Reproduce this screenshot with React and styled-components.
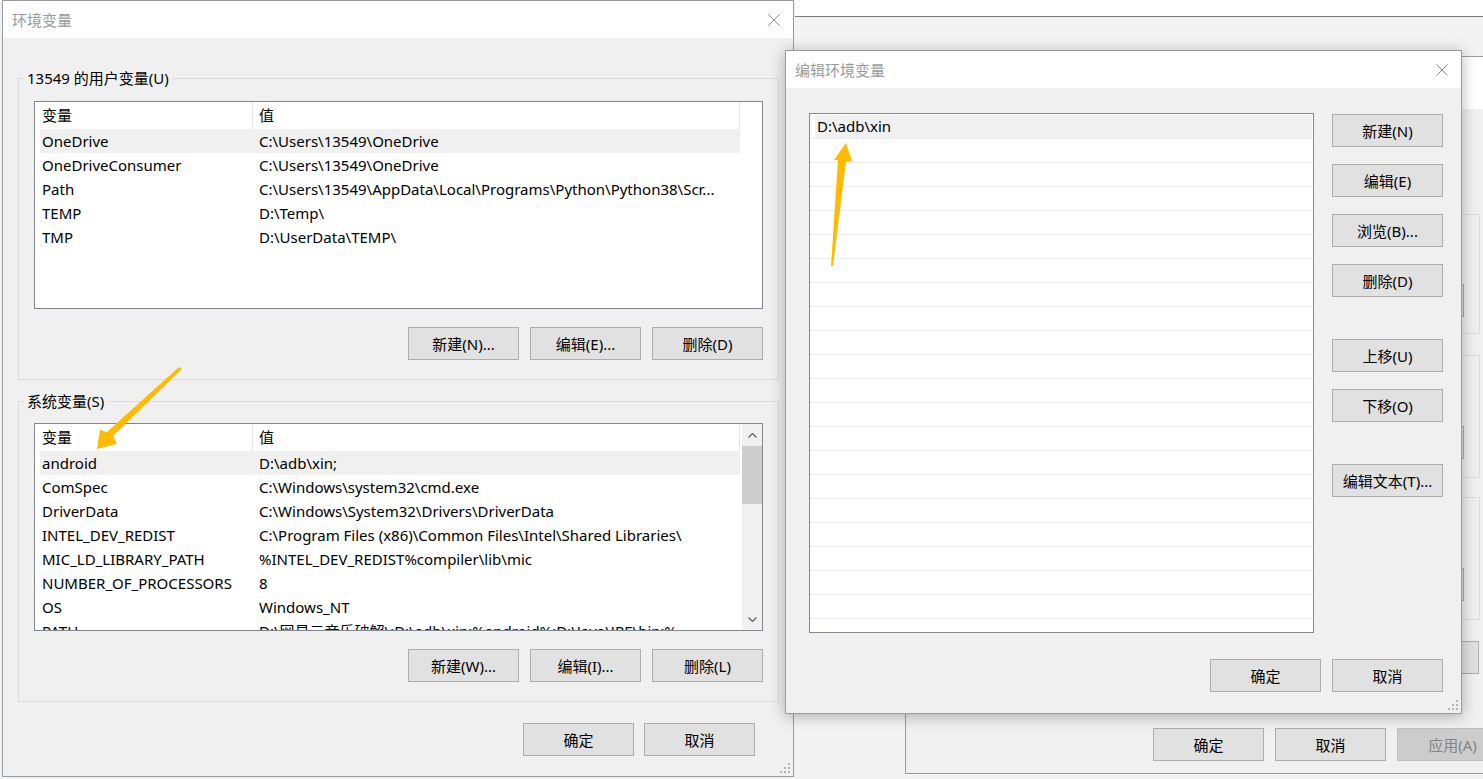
import React from "react";
import styled, { createGlobalStyle } from "styled-components";

const GlobalStyle = createGlobalStyle`
  html, body { margin: 0; padding: 0; }
  body {
    font-family: "Noto Sans", "Noto Sans CJK SC", sans-serif;
    font-size: 15px;
    color: #000;
    background: #eef0f2;
  }
  * { box-sizing: border-box; }
`;

const userVars = [
  ["OneDrive", "C:\\Users\\13549\\OneDrive"],
  ["OneDriveConsumer", "C:\\Users\\13549\\OneDrive"],
  ["Path", "C:\\Users\\13549\\AppData\\Local\\Programs\\Python\\Python38\\Scr..."],
  ["TEMP", "D:\\Temp\\"],
  ["TMP", "D:\\UserData\\TEMP\\"],
];

const systemVars = [
  ["android", "D:\\adb\\xin;"],
  ["ComSpec", "C:\\Windows\\system32\\cmd.exe"],
  ["DriverData", "C:\\Windows\\System32\\Drivers\\DriverData"],
  ["INTEL_DEV_REDIST", "C:\\Program Files (x86)\\Common Files\\Intel\\Shared Libraries\\"],
  ["MIC_LD_LIBRARY_PATH", "%INTEL_DEV_REDIST%compiler\\lib\\mic"],
  ["NUMBER_OF_PROCESSORS", "8"],
  ["OS", "Windows_NT"],
  ["PATH", "D:\\网易云音乐破解\\;D:\\adb\\xin;%android%;D:\\Java\\JRE\\bin;%..."],
];

const pathItems = ["D:\\adb\\xin"];

export default function App() {
  return (
    <>
      <GlobalStyle />
      <Desktop>
        <SettingsWindow>
          <SettingsTop />
        </SettingsWindow>

        <Window $left={905} $top={56} $width={620} $height={718}>
          <BackTitle />
          <BackBody>
            <BackColumn>
              <BackGroup $h={120} $pb={16}>
                <WinButton>设置(S)...</WinButton>
              </BackGroup>
              <BackGroup $h={123} $pb={18} $mt={21}>
                <WinButton>设置(E)...</WinButton>
              </BackGroup>
              <BackGroup $h={123} $pb={18} $mt={19}>
                <WinButton>设置(T)...</WinButton>
              </BackGroup>
              <ButtonRow $mt={21} $pr={1}>
                <WinButton $w={150}>环境变量(N)...</WinButton>
              </ButtonRow>
            </BackColumn>
            <ButtonRow $mt={54} $gap={11}>
              <WinButton>确定</WinButton>
              <WinButton>取消</WinButton>
              <WinButton disabled>应用(A)</WinButton>
            </ButtonRow>
          </BackBody>
        </Window>

        <Window $left={2} $top={0} $width={792} $height={777}>
          <TitleBar>
            <span>环境变量</span>
            <CloseIcon />
          </TitleBar>
          <DialogBody>
            <GroupBox $mt={40}>
              <GroupLabel $gap={13}>13549 的用户变量(U)</GroupLabel>
              <VarList rows={userVars} />
              <ButtonRow $mt={18} $gap={11}>
                <WinButton>新建(N)...</WinButton>
                <WinButton>编辑(E)...</WinButton>
                <WinButton>删除(D)</WinButton>
              </ButtonRow>
            </GroupBox>
            <GroupBox $mt={21}>
              <GroupLabel $gap={12}>系统变量(S)</GroupLabel>
              <VarList rows={systemVars} scroll />
              <ButtonRow $mt={18} $gap={11}>
                <WinButton>新建(W)...</WinButton>
                <WinButton>编辑(I)...</WinButton>
                <WinButton>删除(L)</WinButton>
              </ButtonRow>
            </GroupBox>
            <ButtonRow $mt={21} $gap={10} $pr={24}>
              <WinButton>确定</WinButton>
              <WinButton>取消</WinButton>
            </ButtonRow>
            <Grip />
          </DialogBody>
        </Window>

        <Window $left={785} $top={50} $width={677} $height={664} $shadow>
          <TitleBar>
            <span>编辑环境变量</span>
            <CloseIcon />
          </TitleBar>
          <EditBody>
            <EditTop>
              <PathList>
                {Array.from({ length: 22 }).map((_, i) => (
                  <PathRow key={i}>
                    {pathItems[i] && <PathItem>{pathItems[i]}</PathItem>}
                  </PathRow>
                ))}
              </PathList>
              <SideButtons>
                <WinButton>新建(N)</WinButton>
                <WinButton $mt={17}>编辑(E)</WinButton>
                <WinButton $mt={17}>浏览(B)...</WinButton>
                <WinButton $mt={17}>删除(D)</WinButton>
                <WinButton $mt={42}>上移(U)</WinButton>
                <WinButton $mt={17}>下移(O)</WinButton>
                <WinButton $mt={42}>编辑文本(T)...</WinButton>
              </SideButtons>
            </EditTop>
            <ButtonRow $mt={26} $gap={11}>
              <WinButton>确定</WinButton>
              <WinButton>取消</WinButton>
            </ButtonRow>
            <Grip />
          </EditBody>
        </Window>

        <Arrows viewBox="0 0 1483 779">
          <polygon points="179,367 182,369 113,436 117,444 97,449 100,430 107,432" />
          <polygon points="846,143 852,161 846,162 833,266 831,266 838,160 834,160" />
        </Arrows>
      </Desktop>
    </>
  );
}

function VarList({ rows, scroll }) {
  return (
    <ListBox>
      <ListMain>
        <HeaderRow>
          <HeaderCell $w={218} $pl={7}>变量</HeaderCell>
          <HeaderCell $w={487} $pl={6}>值</HeaderCell>
        </HeaderRow>
        {rows.map(([name, value], i) => (
          <VarRow key={name} $selected={i === 0}>
            <NameCell>{name}</NameCell>
            <ValueCell>{value}</ValueCell>
          </VarRow>
        ))}
      </ListMain>
      {scroll && (
        <ScrollBar>
          <ScrollArrow $h={22}>
            <Chevron up />
          </ScrollArrow>
          <ScrollThumb />
          <ScrollSpace />
          <ScrollArrow $h={21}>
            <Chevron />
          </ScrollArrow>
        </ScrollBar>
      )}
    </ListBox>
  );
}

function CloseIcon() {
  return (
    <svg width="12" height="12" viewBox="0 0 12 12">
      <path d="M0.5 0.5 L11.5 11.5 M11.5 0.5 L0.5 11.5" stroke="#8a8a8a" strokeWidth="1" fill="none" />
    </svg>
  );
}

function Chevron({ up }) {
  return (
    <svg width="9" height="5" viewBox="0 0 9 5">
      <path
        d={up ? "M0.5 4.5 L4.5 0.5 L8.5 4.5" : "M0.5 0.5 L4.5 4.5 L8.5 0.5"}
        stroke="#606060"
        strokeWidth="1.2"
        fill="none"
      />
    </svg>
  );
}

function Grip() {
  const dots = [
    [8, 0],
    [4, 4],
    [8, 4],
    [0, 8],
    [4, 8],
    [8, 8],
  ];
  return (
    <GripBox width="10" height="10" viewBox="0 0 10 10">
      {dots.map(([x, y]) => (
        <rect key={`${x}-${y}`} x={x} y={y} width="2" height="2" fill="#b4b4b4" />
      ))}
    </GripBox>
  );
}

const Desktop = styled.div`
  position: relative;
  width: 1483px;
  height: 779px;
  overflow: hidden;
  background: #eef0f2;
`;

const SettingsWindow = styled.div`
  position: absolute;
  left: 795px;
  top: 0;
  width: 720px;
  height: 779px;
  background: #f3f3f3;
`;

const SettingsTop = styled.div`
  height: 17px;
  background: #fff;
  border-bottom: 1px solid #7a7a7a;
`;

const Window = styled.div`
  position: absolute;
  left: ${(p) => p.$left}px;
  top: ${(p) => p.$top}px;
  width: ${(p) => p.$width}px;
  height: ${(p) => p.$height}px;
  display: flex;
  flex-direction: column;
  background: #f0f0f0;
  border: 1px solid #9c9c9c;
  box-shadow: ${(p) => (p.$shadow ? "0 2px 14px rgba(0, 0, 0, 0.3)" : "none")};
`;

const TitleBar = styled.div`
  height: 37px;
  flex: none;
  display: flex;
  align-items: center;
  justify-content: space-between;
  padding: 0 13px 0 9px;
  background: #fff;
  color: #9a9a9a;
  font-size: 15px;
`;

const BackTitle = styled.div`
  height: 52px;
  flex: none;
  background: #fff;
`;

const BackBody = styled.div`
  flex: 1;
  display: flex;
  flex-direction: column;
  padding: 105px 16px 12px 20px;
`;

const BackColumn = styled.div`
  display: flex;
  flex-direction: column;
  margin-right: 28px;
`;

const BackGroup = styled.div`
  height: ${(p) => p.$h}px;
  margin-top: ${(p) => p.$mt || 0}px;
  border: 1px solid #dcdcdc;
  display: flex;
  align-items: flex-end;
  justify-content: flex-end;
  padding: 0 15px ${(p) => p.$pb}px;
`;

const DialogBody = styled.div`
  position: relative;
  flex: 1;
  display: flex;
  flex-direction: column;
  padding: 0 14px 0 15px;
`;

const GroupBox = styled.div`
  margin-top: ${(p) => p.$mt}px;
  border: 1px solid #dcdcdc;
  padding: 0 15px 19px;
  display: flex;
  flex-direction: column;
`;

const GroupLabel = styled.div`
  align-self: flex-start;
  height: 20px;
  line-height: 20px;
  margin: -11px 0 ${(p) => p.$gap}px -10px;
  padding: 0 3px;
  background: #f0f0f0;
  white-space: nowrap;
`;

const ListBox = styled.div`
  height: 208px;
  flex: none;
  display: flex;
  border: 1px solid #828790;
  background: #fff;
  overflow: hidden;
`;

const ListMain = styled.div`
  flex: 1;
  min-width: 0;
  overflow: hidden;
`;

const HeaderRow = styled.div`
  display: flex;
  height: 27px;
`;

const HeaderCell = styled.div`
  width: ${(p) => p.$w}px;
  flex: none;
  padding-left: ${(p) => p.$pl}px;
  line-height: 27px;
  border-right: 1px solid #e5e5e5;
`;

const VarRow = styled.div`
  display: flex;
  width: 700px;
  height: 24px;
  margin-left: 5px;
  line-height: 24px;
  white-space: nowrap;
  background: ${(p) => (p.$selected ? "#f0f0f0" : "transparent")};
`;

const NameCell = styled.div`
  width: 212px;
  flex: none;
  padding-left: 2px;
  overflow: hidden;
`;

const ValueCell = styled.div`
  flex: 1;
  min-width: 0;
  padding-left: 7px;
  overflow: hidden;
`;

const ScrollBar = styled.div`
  width: 20px;
  flex: none;
  display: flex;
  flex-direction: column;
  background: #f0f0f0;
`;

const ScrollArrow = styled.div`
  height: ${(p) => p.$h}px;
  flex: none;
  display: flex;
  align-items: center;
  justify-content: center;
`;

const ScrollThumb = styled.div`
  height: 58px;
  flex: none;
  background: #cdcdcd;
`;

const ScrollSpace = styled.div`
  flex: 1;
`;

const ButtonRow = styled.div`
  display: flex;
  justify-content: flex-end;
  gap: ${(p) => p.$gap || 0}px;
  margin-top: ${(p) => p.$mt}px;
  padding-right: ${(p) => p.$pr || 0}px;
`;

const WinButton = styled.button`
  width: ${(p) => p.$w || 111}px;
  height: 33px;
  flex: none;
  margin-top: ${(p) => p.$mt || 0}px;
  padding: 0;
  border: 1px solid #adadad;
  background: #e1e1e1;
  color: #000;
  font-family: inherit;
  font-size: 15px;
  white-space: nowrap;

  &:disabled {
    background: #cccccc;
    border-color: #bfbfbf;
    color: #838383;
  }
`;

const EditBody = styled.div`
  position: relative;
  flex: 1;
  display: flex;
  flex-direction: column;
  padding: 25px 18px 21px 23px;
`;

const EditTop = styled.div`
  display: flex;
  align-items: flex-start;
`;

const PathList = styled.div`
  width: 505px;
  height: 520px;
  flex: none;
  padding-top: 1px;
  border: 1px solid #828790;
  background: #fff;
  overflow: hidden;
`;

const PathRow = styled.div`
  height: 24px;
  border-bottom: 1px solid #ededed;
`;

const PathItem = styled.div`
  height: 23px;
  margin: 0 1px 0 5px;
  padding-left: 2px;
  line-height: 23px;
  background: #f0f0f0;
`;

const SideButtons = styled.div`
  display: flex;
  flex-direction: column;
  margin-left: 18px;
  padding-top: 1px;
`;

const GripBox = styled.svg`
  position: absolute;
  right: 3px;
  bottom: 3px;
`;

const Arrows = styled.svg`
  position: absolute;
  left: 0;
  top: 0;
  width: 1483px;
  height: 779px;
  pointer-events: none;
  fill: #ffbb00;
`;
